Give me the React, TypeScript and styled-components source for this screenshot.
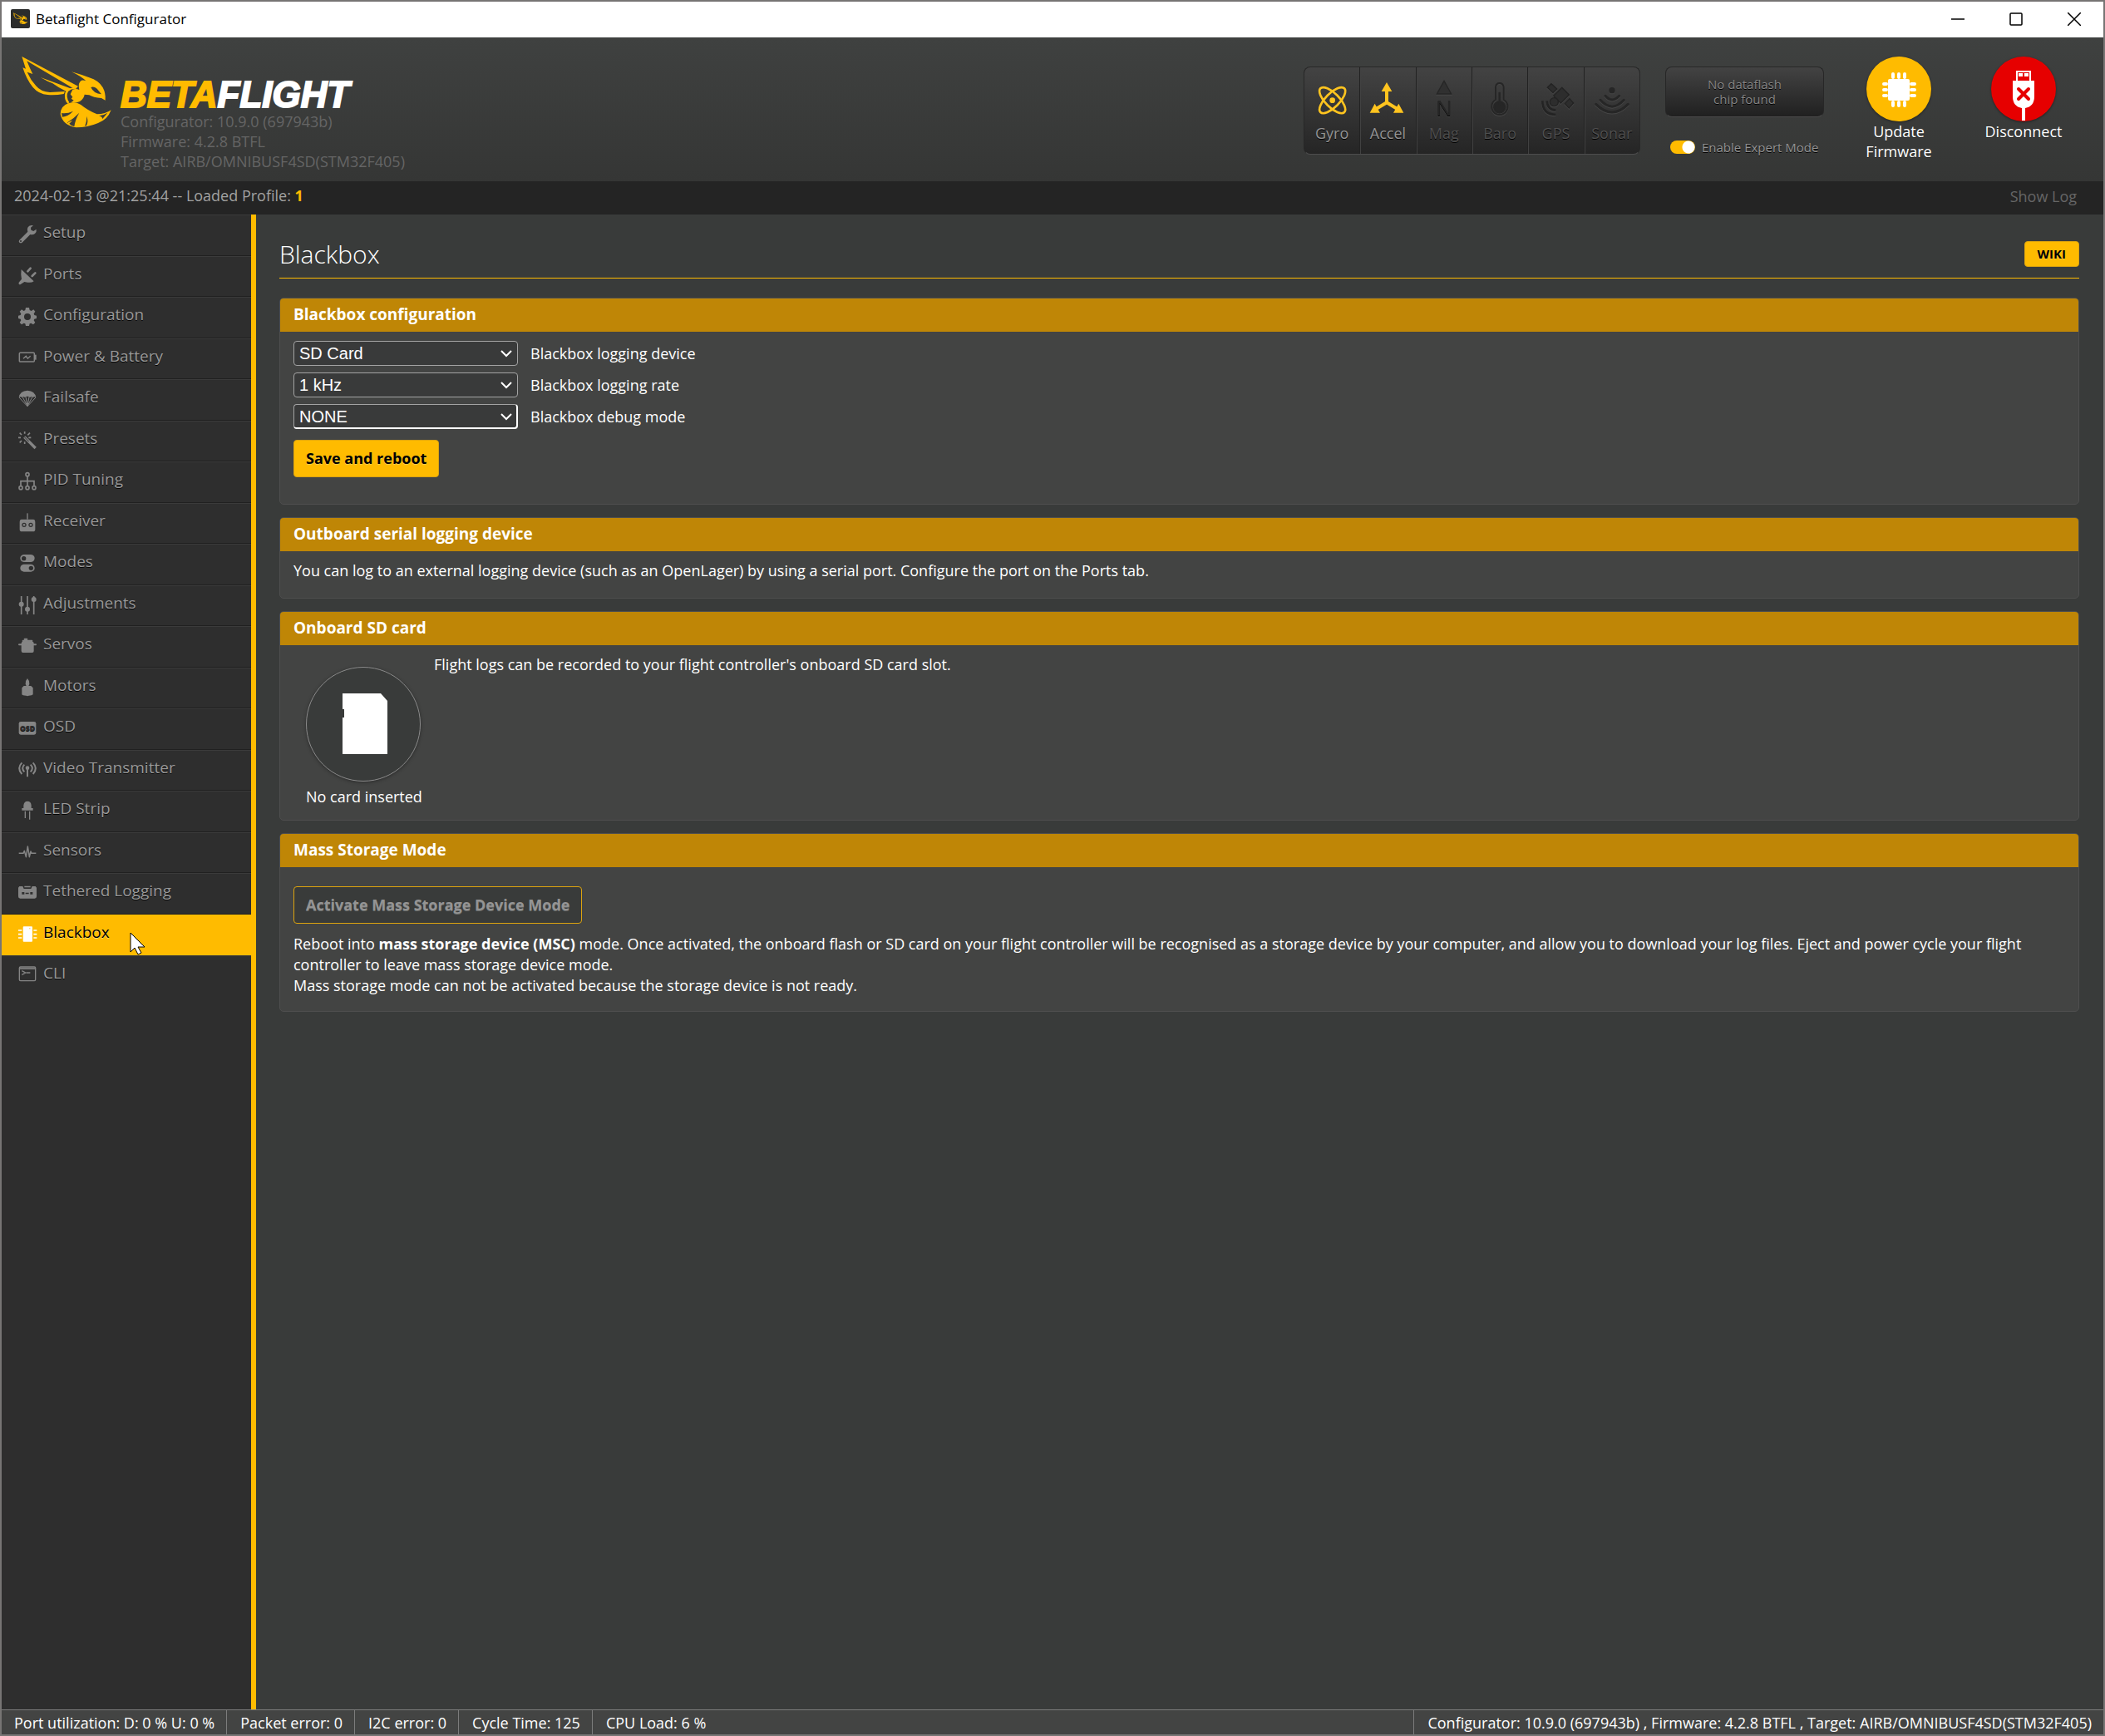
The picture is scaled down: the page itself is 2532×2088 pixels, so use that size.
import React from "react";
import styled, { createGlobalStyle, css } from "styled-components";

const amber = "#ffbb00";

const GlobalStyle = createGlobalStyle`
  *, *::before, *::after { box-sizing: border-box; }
  body {
    margin: 0;
    background: #393b3a;
    color: #fff;
    font-family: "Open Sans", "Noto Sans", sans-serif;
    font-size: 18px;
    line-height: 24px;
  }
  button, input, select { font: inherit; }
  h1, h2, p, ul, dl, dd { margin: 0; padding: 0; }
  ul { list-style: none; }
`;

/* ---------- window frame ---------- */

const Frame = styled.div`
  display: flex;
  flex-direction: column;
  min-height: 100vh;
  border: 2px solid #777574;
`;

const TitleBar = styled.div`
  display: flex;
  align-items: center;
  height: 43px;
  padding: 0 0 2px 11px;
  background: #fff;
  color: #000;
  font-size: 17px;
`;

const AppIcon = styled.svg`
  width: 23px;
  height: 23px;
  margin-right: 7px;
`;

const WindowButtons = styled.div`
  display: flex;
  height: 100%;
  margin-left: auto;
`;

const WindowButton = styled.button`
  display: grid;
  place-items: center;
  width: 70px;
  padding: 0;
  border: 0;
  background: none;
  svg {
    width: 16px;
    height: 16px;
    fill: none;
    stroke: #000;
    stroke-width: 1.5;
  }
`;

/* ---------- header ---------- */

const Header = styled.header`
  display: flex;
  align-items: flex-start;
  height: 173px;
  padding: 0 21px 0 18px;
  background: linear-gradient(#3f4140, #353635);
`;

const Bee = styled.svg`
  width: 120px;
  height: 100px;
  margin: 15px 5px 0 0;
`;

const Brand = styled.div`
  padding-top: 48px;
  color: #656565;
`;

const Wordmark = styled.div`
  color: #fff;
  font: italic bold 44px/41px "Liberation Sans", Arial, sans-serif;
  -webkit-text-stroke: 2px currentColor;
  b { color: ${amber}; }
`;

const SensorPanel = styled.ul`
  display: flex;
  width: 405px;
  height: 106px;
  margin: 35px 30px 0 auto;
  border: 1px solid #272727;
  border-bottom-color: #4d4d4d;
  border-radius: 8px;
  background: linear-gradient(#434343, #252525);
  overflow: hidden;
`;

const SensorCell = styled.li<{ $on?: boolean }>`
  flex: 1;
  display: flex;
  flex-direction: column;
  align-items: center;
  padding-top: 15px;
  color: ${(p) => (p.$on ? "#949494" : "#4f4f4f")};
  text-shadow: 0 1px #000;
  & + & {
    border-left: 1px solid #222;
    box-shadow: inset 1px 0 #414141;
  }
  svg {
    width: 46px;
    height: 46px;
    margin-bottom: 6px;
    overflow: visible;
    color: ${(p) => (p.$on ? "#ffc41f" : "#262626")};
    filter: ${(p) => (p.$on ? "none" : "drop-shadow(0 1px 0 #474747)")};
  }
`;

const FlashColumn = styled.div`
  width: 191px;
  margin: 35px 15px 0 0;
  font-size: 15px;
  line-height: 18px;
`;

const FlashBox = styled.div`
  display: grid;
  place-items: center;
  height: 61px;
  padding: 0 40px 2px;
  border: 1px solid #272727;
  border-bottom-color: #4a4a4a;
  border-radius: 8px;
  background: linear-gradient(#434343, #202020);
  color: #858585;
  text-align: center;
  text-shadow: 0 1px #000;
`;

const ExpertLabel = styled.label`
  display: flex;
  align-items: center;
  gap: 8px;
  margin: 27px 0 0 6px;
  color: #949494;
  text-shadow: 0 1px #000;
  white-space: nowrap;
`;

const Switch = styled.input`
  appearance: none;
  width: 30px;
  height: 16px;
  margin: 0;
  border-radius: 8px;
  background: radial-gradient(circle at 22px 8px, #fff 7px, transparent 8px) ${amber};
`;

const RoundAction = styled.button`
  display: flex;
  flex-direction: column;
  align-items: center;
  width: 150px;
  padding: 23px 25px 0;
  border: 0;
  background: none;
  color: #fff;
  text-shadow: 0 1px #222;
`;

const Disc = styled.svg<{ $color: string }>`
  width: 78px;
  height: 78px;
  border-radius: 50%;
  background: ${(p) => p.$color};
  box-shadow: 0 1px 3px rgba(0, 0, 0, 0.4);
`;

const LogBar = styled.div`
  display: flex;
  justify-content: space-between;
  height: 40px;
  padding: 5px 32px 0 15px;
  background: #242424;
  color: #a2a2a2;
  b { color: ${amber}; }
`;

const ShowLog = styled.a`
  padding-top: 1px;
  color: #666;
  text-decoration: none;
`;

/* ---------- body ---------- */

const Body = styled.div`
  flex: 1;
  display: flex;
`;

const Sidebar = styled.nav`
  flex: none;
  width: 306px;
  border-right: 6px solid ${amber};
  background: #2e2e2e;
`;

const NavItem = styled.li`
  height: 50px;
  &:nth-child(even) { height: 49px; }
`;

const NavLink = styled.a<{ $active?: boolean; $last?: boolean }>`
  position: relative;
  display: flex;
  align-items: flex-start;
  gap: 8px;
  height: 100%;
  padding: 9px 0 0 20px;
  border-top: 1px solid #3b3b3b;
  border-bottom: 1px solid #202020;
  color: #999;
  font-size: 19px;
  line-height: 23px;
  text-decoration: none;
  text-shadow: 0 1px rgba(0, 0, 0, 0.9);
  > svg:first-child {
    flex: none;
    width: 22px;
    height: 22px;
    margin-top: 3px;
    color: #858585;
    fill: currentColor;
  }
  ${(p) => p.$last && css`border-bottom-color: transparent;`}
  ${(p) =>
    p.$active &&
    css`
      border-color: ${amber};
      background: ${amber};
      color: #000;
      text-shadow: 0 1px rgba(255, 255, 255, 0.45);
      > svg:first-child { color: #fff; }
    `}
`;

const Pointer = styled.svg`
  position: absolute;
  left: 154px;
  top: 20px;
  width: 19px;
  height: 28px;
`;

const Content = styled.main`
  flex: 1;
  min-width: 0;
  padding: 32px 29px 0 28px;
`;

const PageHead = styled.div`
  display: flex;
  justify-content: space-between;
  margin-bottom: 23px;
  padding-bottom: 13px;
  border-bottom: 1px solid ${amber};
`;

const PageTitle = styled.h1`
  font-size: 30px;
  font-weight: 300;
  line-height: 31px;
`;

const Button = styled.button<{ $size?: "small" }>`
  height: ${(p) => (p.$size ? 31 : 45)}px;
  padding: 0 ${(p) => (p.$size ? 15 : 14)}px 2px;
  border: 1px solid #dca30f;
  border-radius: 4px;
  background: ${amber};
  color: #000;
  font-size: ${(p) => (p.$size ? 15 : 18)}px;
  font-weight: bold;
  line-height: 24px;
  text-shadow: 0 1px rgba(255, 255, 255, 0.3);
  &:disabled {
    background: #393b3a;
    color: #949494;
    text-shadow: 0 1px rgba(255, 255, 255, 0.25);
  }
`;

const Panel = styled.section`
  margin-bottom: 15px;
  border: 1px solid #4e4e4e;
  border-radius: 5px;
  background: #434443;
  overflow: hidden;
`;

const PanelTitle = styled.h2`
  height: 40px;
  padding: 6px 16px 0;
  background: #bf8606;
  font-size: 19px;
  font-weight: bold;
  line-height: 26px;
`;

const PanelBody = styled.div<{ $bottom: number }>`
  padding: 11px 16px ${(p) => p.$bottom}px;
`;

const Field = styled.div`
  display: flex;
  align-items: center;
  gap: 15px;
  margin-bottom: 8px;
`;

const SelectBox = styled.div`
  position: relative;
  width: 270px;
  svg {
    position: absolute;
    right: 7px;
    top: 11px;
    width: 14px;
    height: 9px;
    pointer-events: none;
  }
`;

const Select = styled.select<{ $raised?: boolean }>`
  display: block;
  appearance: none;
  width: 100%;
  height: 30px;
  padding: 0 6px;
  border: 1px solid #a3a3a3;
  border-radius: 4px;
  background: #393a3a;
  color: #fff;
  font: 20px/24px "Liberation Sans", Arial, sans-serif;
  ${(p) =>
    p.$raised &&
    css`
      border-right: 2px solid #fff;
      border-bottom: 2px solid #fff;
    `}
`;

const SaveRow = styled.div`
  padding-top: 5px;
`;

const CardRow = styled.div`
  display: flex;
  align-items: flex-start;
  gap: 16px;
`;

const CardFigure = styled.figure`
  width: 138px;
  margin: 15px 0 0 15px;
  text-align: center;
  white-space: nowrap;
  svg {
    display: block;
    width: 138px;
    height: 138px;
    margin-bottom: 6px;
    border: 1px solid #8b8b8b;
    border-radius: 50%;
    background: #393b3a;
    box-shadow: 0 1px 4px rgba(0, 0, 0, 0.35);
  }
`;

const StorageAction = styled.div`
  padding: 12px 0;
`;

const StorageText = styled.p`
  line-height: 25px;
`;

const StatusBar = styled.footer`
  display: flex;
  height: 30px;
  border-top: 1px solid #7c7c7c;
  background: #434443;
  white-space: nowrap;
`;

const StatusCell = styled.div<{ $end?: boolean }>`
  padding: 3px 14px 0 15px;
  & + & { border-left: 1px solid #7c7c7c; padding-left: 16px; }
  ${(p) => p.$end && css`margin-left: auto;`}
`;

/* ---------- drawings ---------- */

const BeeShape = () => (
  <g fill={amber}>
    <path
      fillRule="evenodd"
      d="M19 24 L222 131 L214 140 L203 138 L37 40 L47 64 L58 87 L38 80 Q50 108 70 130 Q88 152 120 153 L174 150 L170 159 Q140 164 112 162 Q80 160 58 134 Q36 108 22 64 L33 68 Z"
    />
    <path d="M86 99 L194 139 L178 149 Q150 136 130 121 L112 113 Z" />
    <path d="M182 140 L212 135 L214 140 Q196 140 186 150 Q176 168 190 190 L184 194 Q170 178 175 155 Z" />
    <path d="M202 143 Q214 138 226 144 Q220 118 234 110 Q242 108 250 112 Q234 96 198 79 Q230 88 262 100 Q296 110 311 136 Q322 156 320 182 L306 174 Q276 172 262 163 L245 161 Q243 176 228 186 Q212 194 196 190 L206 182 L197 176 L202 170 L194 160 Z" />
    <path d="M158 232 Q158 202 188 192 Q214 186 232 198 Q256 218 290 232 Q320 232 341 217 Q328 252 294 264 Q256 280 214 280 Q166 272 158 232 Z" />
    <g fill="#3a3c3b">
      <path d="M268 135 Q278 130 290 140 L306 160 Q278 158 268 135 Z" />
      <path d="M162 228 Q182 231 204 221 Q186 240 165 242 Z" />
      <path d="M180 264 Q206 248 226 227 Q212 250 208 276 Q196 274 190 266 L202 254 Z" />
      <path d="M246 274 Q254 258 252 239 Q260 256 252 274 Z" />
      <path d="M297 238 Q314 236 328 227 L310 249 Q308 240 297 238 Z" />
    </g>
  </g>
);

const wavePath = "M2 33 H18 L22 24 L28 46 L34 8 L40 46 L45 26 L48 33 H64";

const navIcons: Record<string, React.ReactNode> = {
  Setup: (
    <path
      fillRule="evenodd"
      d="M65 14 L55 21 L46 17 L45 8 L54 1 Q40 -3 34 8 Q31 15 34 23 L4 53 Q0 58 4 62 Q9 66 14 62 L43 33 Q52 36 60 30 Q67 23 65 14 Z M9 54 A3 3 0 1 1 9 60 A3 3 0 1 1 9 54 Z"
    />
  ),
  Ports: (
    <g>
      <path d="M11 9 L56 52 Q48 58 34 56 L22 54 L7 64 Q0 64 2 56 L12 44 Q8 30 11 9 Z" />
      <path d="M34 16 L44 5 M50 33 L61 22" stroke="currentColor" strokeWidth="8" strokeLinecap="round" />
    </g>
  ),
  Configuration: (
    <path
      fillRule="evenodd"
      d="M27 0 H39 L41 9 L47 12 L55 7 L61 14 L56 22 L58 27 L66 29 V39 L58 41 L56 46 L61 54 L54 61 L46 56 L41 58 L39 66 H27 L25 58 L20 56 L12 61 L5 54 L10 46 L8 41 L0 39 V29 L8 27 L10 22 L5 14 L12 7 L20 12 L25 9 Z M33 21 A12 12 0 1 0 33 45 A12 12 0 1 0 33 21 Z"
    />
  ),
  "Power & Battery": (
    <g fill="none" stroke="currentColor">
      <rect x="4" y="13" width="54" height="32" rx="3" strokeWidth="4.5" />
      <path d="M62 20 V38" strokeWidth="6" />
      <path d="M18 34 L28 25 L34 34 L44 25" strokeWidth="4" />
    </g>
  ),
  Failsafe: (
    <g>
      <path d="M2 27 Q6 3 33 2 Q60 3 64 27 Q58 22 52 27 Q47 22 42 27 Q33 20 24 27 Q19 22 14 27 Q8 22 2 27 Z" />
      <path d="M3 27 L33 59 L63 27 M16 27 L33 58 L50 27 M27 25 L33 58 L39 25" fill="none" stroke="currentColor" strokeWidth="3" />
    </g>
  ),
  Presets: (
    <g fill="none" stroke="currentColor">
      <path d="M22 20 L62 60" strokeWidth="10" />
      <path d="M23 21 L38 36" stroke="#2e2e2e" strokeWidth="3" />
      <path d="M23 0 V8 M0 22 H9 M5 5 L12 12 M42 5 L34 13 M46 22 H37 M5 40 L12 33 M23 45 V37" strokeWidth="5" />
    </g>
  ),
  "PID Tuning": (
    <g fill="none" stroke="currentColor" strokeWidth="5">
      <circle cx="33" cy="8" r="6" />
      <circle cx="9" cy="56" r="6" />
      <circle cx="33" cy="56" r="6" />
      <circle cx="57" cy="56" r="6" />
      <path d="M33 14 V50 M9 50 V32 H57 V50" />
    </g>
  ),
  Receiver: (
    <g>
      <path
        fillRule="evenodd"
        d="M12 20 H54 Q61 20 61 30 V56 Q61 64 53 64 H13 Q5 64 5 56 V30 Q5 20 12 20 Z M21 32 A8 8 0 1 0 21 48 A8 8 0 1 0 21 32 Z M45 32 A8 8 0 1 0 45 48 A8 8 0 1 0 45 32 Z"
      />
      <circle cx="21" cy="40" r="4" />
      <circle cx="45" cy="40" r="4" />
      <rect x="31" y="-2" width="4" height="22" />
    </g>
  ),
  Modes: (
    <path
      fillRule="evenodd"
      d="M20 0 H46 Q59 2 59 13 Q59 25 46 27 H20 Q7 25 7 13 Q7 2 20 0 Z M20 6 A8 8 0 1 0 20 22 A8 8 0 1 0 20 6 Z M20 35 H46 Q59 37 59 49 Q59 60 46 62 H20 Q7 60 7 49 Q7 37 20 35 Z M46 41 A8 8 0 1 0 46 57 A8 8 0 1 0 46 41 Z"
    />
  ),
  Adjustments: (
    <g>
      <path d="M11 0 V66 M33 0 V66 M56 0 V66" stroke="currentColor" strokeWidth="5" />
      <circle cx="11" cy="29" r="9" />
      <circle cx="33" cy="47" r="9" />
      <circle cx="56" cy="12" r="9" />
    </g>
  ),
  Servos: (
    <g>
      <rect x="20" y="5" width="14" height="7" rx="3" />
      <rect x="14" y="11" width="38" height="8" rx="3" />
      <rect x="0" y="25" width="66" height="6" rx="3" />
      <rect x="11" y="17" width="45" height="40" rx="6" />
    </g>
  ),
  Motors: (
    <g>
      <path d="M33 0 Q41 8 40 20 L37 28 H29 L26 20 Q25 8 33 0 Z" />
      <path d="M20 27 H46 L53 34 V58 Q50 62 38 62 L33 64 L28 62 Q15 62 13 58 V34 Z" />
    </g>
  ),
  OSD: (
    <g>
      <rect x="2" y="9" width="62" height="47" rx="7" />
      <text x="33" y="42" textAnchor="middle" fill="#2e2e2e" fontSize="26" fontWeight="800">
        OSD
      </text>
    </g>
  ),
  "Video Transmitter": (
    <g>
      <g fill="none" stroke="currentColor" strokeWidth="6">
        <path d="M13 7 Q-6 27 13 48 M53 7 Q72 27 53 48 M22 14 Q9 27 22 40 M44 14 Q57 27 44 40" />
        <path d="M33 28 V58" />
      </g>
      <circle cx="33" cy="26" r="7" />
    </g>
  ),
  "LED Strip": (
    <g>
      <path d="M19 24 V14 Q21 -1 33 -1 Q46 -1 47 14 V24 H53 V32 H13 V24 Z" />
      <path d="M25 35 V60 M41 35 V65" stroke="currentColor" strokeWidth="4" />
    </g>
  ),
  Sensors: <path d={wavePath} transform="translate(0 4)" fill="none" stroke="currentColor" strokeWidth="4.5" strokeLinejoin="round" />,
  "Tethered Logging": (
    <path
      fillRule="evenodd"
      d="M4 9 H16 L20 18 H46 L50 9 H62 L66 14 V46 Q66 53 59 53 H7 Q0 53 0 46 V14 Z M22 8 H44 V13 H22 Z M13 30 H22 V38 H13 Z M26 32 H38 V37 H26 Z M43 30 H52 V38 H43 Z"
    />
  ),
  Blackbox: (
    <g>
      <path fillRule="evenodd" d="M20 4 H48 Q51 4 51 8 V56 Q51 59 48 59 H20 Q17 59 17 56 V8 Q17 4 20 4 Z M40 10 V13 H43 V10 Z" />
      <path d="M0 18 H13 M0 32 H13 M0 45 H13 M55 18 H67 M55 32 H67 M55 45 H67" stroke="currentColor" strokeWidth="5" />
    </g>
  ),
  CLI: (
    <g fill="none" stroke="currentColor">
      <rect x="4" y="3" width="58" height="50" rx="4" strokeWidth="4" />
      <path d="M4 9 H62" strokeWidth="5" />
      <path d="M13 17 L26 24 L13 31 M29 24 H43" strokeWidth="4" />
    </g>
  ),
};

const sensors: { name: string; on?: boolean; icon: React.ReactNode }[] = [
  {
    name: "Gyro",
    on: true,
    icon: (
      <g fill="none" stroke="currentColor" strokeWidth="8">
        <ellipse cx="71" cy="74" rx="61" ry="25" transform="rotate(45 71 74)" />
        <ellipse cx="71" cy="74" rx="61" ry="25" transform="rotate(-45 71 74)" />
        <circle cx="71" cy="74" r="10" fill="currentColor" stroke="none" />
      </g>
    ),
  },
  {
    name: "Accel",
    on: true,
    icon: (
      <g fill="currentColor">
        <path d="M66 40 V82 L29 104 M66 82 L103 104" fill="none" stroke="currentColor" strokeWidth="12" />
        <path d="M66 9 L85 42 H47 Z M5 119 L23 86 L42 119 Z M127 119 L109 86 L90 119 Z" />
      </g>
    ),
  },
  {
    name: "Mag",
    icon: (
      <g fill="currentColor">
        <path d="M69 4 L95 51 H43 Z" fill="#303030" stroke="currentColor" strokeWidth="4" />
        <text x="69" y="130" textAnchor="middle" fontSize="78" fontFamily="Liberation Sans">
          N
        </text>
      </g>
    ),
  },
  {
    name: "Baro",
    icon: (
      <g fill="none" stroke="currentColor" strokeWidth="6">
        <path d="M54 72 V26 Q56 12 68 12 Q80 12 83 26 V72 A29 29 0 1 1 54 72 Z" />
        <circle cx="68" cy="99" r="20" fill="currentColor" />
        <path d="M68 48 V90" strokeWidth="8" strokeLinecap="round" />
      </g>
    ),
  },
  {
    name: "GPS",
    icon: (
      <g fill="#2d2d2d" stroke="#232323" strokeWidth="4">
        <path d="M54 14 L74 33 L60 47 L40 28 Z M92 28 L118 54 L88 84 L62 58 Z M120 68 L134 84 L118 102 L103 86 Z" />
        <circle cx="64" cy="80" r="15" />
        <path d="M22 76 Q22 126 70 126 M38 76 Q40 108 70 110" fill="none" strokeWidth="8" />
      </g>
    ),
  },
  {
    name: "Sonar",
    icon: (
      <g fill="none" stroke="currentColor" strokeWidth="9" strokeLinecap="round">
        <circle cx="69" cy="38" r="11" fill="currentColor" stroke="none" />
        <path d="M45 58 Q69 86 95 58 M27 73 Q69 120 112 73 M11 88 Q69 146 127 88" />
      </g>
    ),
  },
];

const fields = [
  { id: "device", value: "SD Card", label: "Blackbox logging device" },
  { id: "rate", value: "1 kHz", label: "Blackbox logging rate" },
  { id: "debug", value: "NONE", label: "Blackbox debug mode", raised: true },
];

const ChipDrawing = () => (
  <g fill="#fff">
    <rect x="26" y="27" width="26" height="26" rx="2" />
    <path
      d="M32 21 V25 M39 21 V25 M46 21 V25 M32 55 V59 M39 55 V59 M46 55 V59 M21 33 H24 M21 40 H24 M21 47 H24 M54 33 H58 M54 40 H58 M54 47 H58"
      stroke="#fff"
      strokeWidth="4"
      strokeLinecap="round"
    />
  </g>
);

const UsbDrawing = () => (
  <g>
    <path d="M31 30 V18 H47 V30" fill="none" stroke="#fff" strokeWidth="2" />
    <path d="M33 20 H38 V24 H33 Z M40 20 H45 V24 H40 Z" fill="#fff" />
    <path d="M26 29 H52 V48 Q52 60 41 62 V77 H37 V62 Q26 60 26 48 Z" fill="#fff" />
    <path d="M33 39 L45 51 M45 39 L33 51" stroke="#e60000" strokeWidth="4" strokeLinecap="round" />
  </g>
);

export default function App() {
  const names = Object.keys(navIcons);
  return (
    <>
      <GlobalStyle />
      <Frame>
        <TitleBar>
          <AppIcon viewBox="0 0 23 23" aria-hidden="true">
            <rect width="23" height="23" rx="2" fill="#2b2c2c" />
            <g transform="translate(2 3) scale(0.054)">
              <BeeShape />
            </g>
          </AppIcon>
          Betaflight Configurator
          <WindowButtons>
            <WindowButton aria-label="Minimize">
              <svg viewBox="0 0 16 16"><path d="M0 8 H16" /></svg>
            </WindowButton>
            <WindowButton aria-label="Maximize">
              <svg viewBox="0 0 16 16"><rect x="1" y="1" width="14" height="14" rx="1" /></svg>
            </WindowButton>
            <WindowButton aria-label="Close">
              <svg viewBox="0 0 16 16"><path d="M0 0 L16 16 M16 0 L0 16" /></svg>
            </WindowButton>
          </WindowButtons>
        </TitleBar>

        <Header>
          <Bee viewBox="0 0 360 300" aria-hidden="true">
            <BeeShape />
          </Bee>
          <Brand>
            <Wordmark><b>BETA</b>FLIGHT</Wordmark>
            <div>Configurator: 10.9.0 (697943b)</div>
            <div>Firmware: 4.2.8 BTFL</div>
            <div>Target: AIRB/OMNIBUSF4SD(STM32F405)</div>
          </Brand>
          <SensorPanel>
            {sensors.map((s) => (
              <SensorCell key={s.name} $on={s.on}>
                <svg viewBox="0 0 138 138" aria-hidden="true">{s.icon}</svg>
                {s.name}
              </SensorCell>
            ))}
          </SensorPanel>
          <FlashColumn>
            <FlashBox>No dataflash chip found</FlashBox>
            <ExpertLabel>
              <Switch type="checkbox" defaultChecked />
              Enable Expert Mode
            </ExpertLabel>
          </FlashColumn>
          <RoundAction>
            <Disc $color={amber} viewBox="0 0 78 78" aria-hidden="true"><ChipDrawing /></Disc>
            Update Firmware
          </RoundAction>
          <RoundAction>
            <Disc $color="#e60000" viewBox="0 0 78 78" aria-hidden="true"><UsbDrawing /></Disc>
            Disconnect
          </RoundAction>
        </Header>

        <LogBar>
          <span>2024-02-13 @21:25:44 -- Loaded Profile: <b>1</b></span>
          <ShowLog href="#log">Show Log</ShowLog>
        </LogBar>

        <Body>
          <Sidebar>
            <ul>
              {names.map((name) => (
                <NavItem key={name}>
                  <NavLink href={"#" + name} $active={name === "Blackbox"} $last={name === "CLI"}>
                    <svg viewBox="0 0 66 66" overflow="visible" aria-hidden="true">{navIcons[name]}</svg>
                    {name}
                    {name === "Blackbox" && (
                      <Pointer viewBox="0 0 19 28" aria-hidden="true">
                        <path d="M1 1 V24 L6 19 L10 27 L14 25 L10 18 H18 Z" fill="#fff" stroke="#000" />
                      </Pointer>
                    )}
                  </NavLink>
                </NavItem>
              ))}
            </ul>
          </Sidebar>

          <Content>
            <PageHead>
              <PageTitle>Blackbox</PageTitle>
              <Button $size="small">WIKI</Button>
            </PageHead>

            <Panel>
              <PanelTitle>Blackbox configuration</PanelTitle>
              <PanelBody $bottom={32}>
                {fields.map((f) => (
                  <Field key={f.id}>
                    <SelectBox>
                      <Select id={f.id} $raised={f.raised}>
                        <option>{f.value}</option>
                      </Select>
                      <svg viewBox="0 0 14 9" aria-hidden="true">
                        <path d="M1 1 L7 7 L13 1" fill="none" stroke="#fff" strokeWidth="2" />
                      </svg>
                    </SelectBox>
                    <label htmlFor={f.id}>{f.label}</label>
                  </Field>
                ))}
                <SaveRow>
                  <Button>Save and reboot</Button>
                </SaveRow>
              </PanelBody>
            </Panel>

            <Panel>
              <PanelTitle>Outboard serial logging device</PanelTitle>
              <PanelBody $bottom={21}>
                <p>
                  You can log to an external logging device (such as an OpenLager) by using a serial port. Configure the
                  port on the Ports tab.
                </p>
              </PanelBody>
            </Panel>

            <Panel>
              <PanelTitle>Onboard SD card</PanelTitle>
              <PanelBody $bottom={16}>
                <CardRow>
                  <CardFigure>
                    <svg viewBox="0 0 136 136" aria-hidden="true">
                      <path d="M43 31 H89 L97 40 V104 H43 V60 H45 V50 H43 Z" fill="#fff" />
                    </svg>
                    <figcaption>No card inserted</figcaption>
                  </CardFigure>
                  <p>Flight logs can be recorded to your flight controller's onboard SD card slot.</p>
                </CardRow>
              </PanelBody>
            </Panel>

            <Panel>
              <PanelTitle>Mass Storage Mode</PanelTitle>
              <PanelBody $bottom={18}>
                <StorageAction>
                  <Button disabled>Activate Mass Storage Device Mode</Button>
                </StorageAction>
                <StorageText>
                  Reboot into <b>mass storage device (MSC)</b> mode. Once activated, the onboard flash or SD card on your
                  flight controller will be recognised as a storage device by your computer, and allow you to download
                  your log files. Eject and power cycle your flight controller to leave mass storage device mode.
                </StorageText>
                <StorageText>
                  Mass storage mode can not be activated because the storage device is not ready.
                </StorageText>
              </PanelBody>
            </Panel>
          </Content>
        </Body>

        <StatusBar>
          <StatusCell>Port utilization: D: 0 % U: 0 %</StatusCell>
          <StatusCell>Packet error: 0</StatusCell>
          <StatusCell>I2C error: 0</StatusCell>
          <StatusCell>Cycle Time: 125</StatusCell>
          <StatusCell>CPU Load: 6 %</StatusCell>
          <StatusCell $end>
            Configurator: 10.9.0 (697943b) , Firmware: 4.2.8 BTFL , Target: AIRB/OMNIBUSF4SD(STM32F405)
          </StatusCell>
        </StatusBar>
      </Frame>
    </>
  );
}
